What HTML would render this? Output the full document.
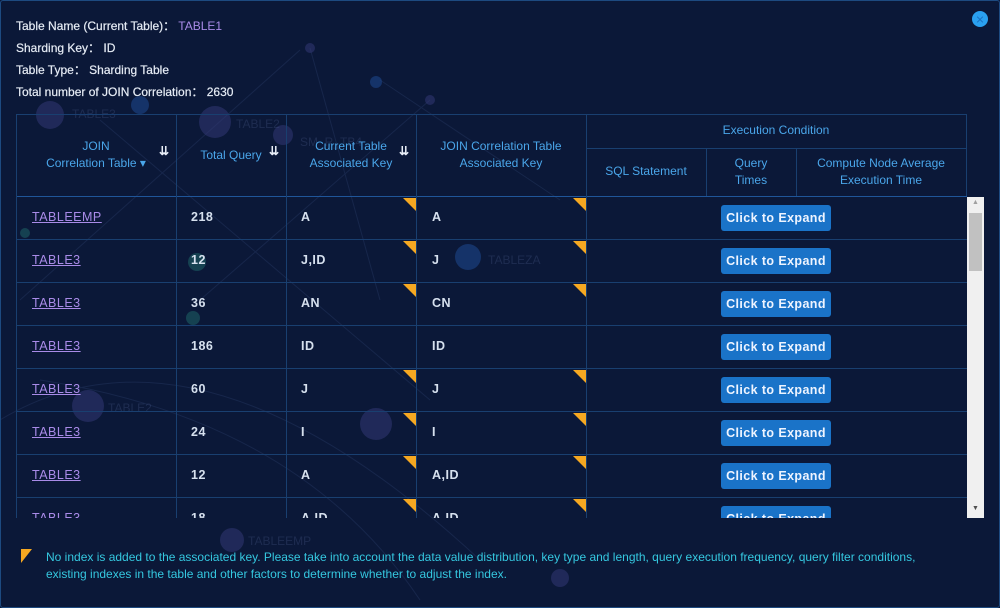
<!DOCTYPE html>
<html><head><meta charset="utf-8"><style>
*{margin:0;padding:0;box-sizing:border-box}
body{width:1000px;height:608px;overflow:hidden;background:#0b1838;font-family:"Liberation Sans",sans-serif;position:relative}
.frame{position:absolute;left:0;top:0;width:1000px;height:608px;border:1px solid #1d4a80;border-radius:3px}
.info{position:absolute;left:16px;font-size:12px;color:#e6ecf5;-webkit-text-stroke:.2px #e6ecf5}
.info span{color:#a98be8;-webkit-text-stroke:0}
.close{position:absolute;left:972px;top:11px;width:16px;height:16px;border-radius:50%;background:#2aa0f0}
.close:before,.close:after{content:"";position:absolute;left:4px;top:7.5px;width:8px;height:1px;background:#1a70c0;transform:rotate(45deg)}
.close:after{transform:rotate(-45deg)}
.vl{position:absolute;width:1px;background:#193f70}
.hl{position:absolute;height:1px;background:#193f70}
.h{position:absolute;color:#4aa6ea;font-size:12px;text-align:center;line-height:17px}
.c{position:absolute;color:#d6e0ee;font-size:12.5px;font-weight:bold;letter-spacing:.5px}
.lnk{color:#a98be8;text-decoration:underline;font-weight:normal}
.tri{position:absolute;width:0;height:0;border-top:13px solid #f6a821;border-left:13px solid transparent}
.btn{position:absolute;left:721px;width:110px;height:26px;background:#1a73c8;border-radius:3px;color:#eef4ff;font-weight:bold;font-size:12.5px;text-align:center;line-height:26px;letter-spacing:.4px}
.clip{position:absolute;left:0;top:197px;width:1000px;height:321px;overflow:hidden}
.sort{position:absolute;color:#e8eef8;font-size:12px;font-weight:bold}
</style></head><body>
<svg style="position:absolute;left:0;top:0" width="1000" height="608">
<g stroke="#23355e" stroke-width="1" fill="none" opacity=".5">
<line x1="310" y1="48" x2="380" y2="300"/><line x1="430" y1="100" x2="200" y2="300"/><line x1="20" y1="300" x2="300" y2="50"/><line x1="100" y1="120" x2="430" y2="400"/><line x1="380" y1="80" x2="560" y2="200"/><path d="M0 420 Q200 300 480 560"/><path d="M40 380 Q300 420 420 600"/></g>
<g fill="#363a7a" opacity=".5"><circle cx="50" cy="115" r="14"/><circle cx="215" cy="122" r="16"/><circle cx="283" cy="135" r="10"/><circle cx="376" cy="424" r="16"/><circle cx="88" cy="406" r="16"/><circle cx="232" cy="540" r="12"/><circle cx="560" cy="578" r="9"/><circle cx="310" cy="48" r="5"/><circle cx="430" cy="100" r="5"/></g>
<g fill="#1f4d99" opacity=".5"><circle cx="468" cy="257" r="13"/><circle cx="376" cy="82" r="6"/><circle cx="140" cy="105" r="9"/></g>
<g fill="#1f6a6a" opacity=".5"><circle cx="197" cy="262" r="9"/><circle cx="25" cy="233" r="5"/><circle cx="193" cy="318" r="7"/></g>
<g fill="#4a5a8a" opacity=".3" font-size="12" font-family="Liberation Sans"><text x="72" y="118">TABLE3</text><text x="236" y="128">TABLE2</text><text x="488" y="264">TABLEZA</text><text x="248" y="545">TABLEEMP</text><text x="108" y="412">TABLE2</text><text x="300" y="146">SM_R_TB4</text></g>
</svg>
<div class="frame"></div>
<div class="close"></div>
<div class="info" style="top:17px">Table Name (Current Table)： <span>TABLE1</span></div>
<div class="info" style="top:39px">Sharding Key： ID</div>
<div class="info" style="top:61px">Table Type： Sharding Table</div>
<div class="info" style="top:83px">Total number of JOIN Correlation： 2630</div>

<div class="hl" style="left:16px;top:114px;width:951px"></div>
<div class="hl" style="left:586px;top:148px;width:381px"></div>
<div class="hl" style="left:16px;top:196px;width:951px;background:#1f5599"></div>
<div class="vl" style="left:16px;top:114px;height:404px"></div>
<div class="vl" style="left:176px;top:114px;height:404px"></div>
<div class="vl" style="left:286px;top:114px;height:404px"></div>
<div class="vl" style="left:416px;top:114px;height:404px"></div>
<div class="vl" style="left:586px;top:114px;height:404px"></div>
<div class="vl" style="left:706px;top:148px;height:48px"></div>
<div class="vl" style="left:796px;top:148px;height:48px"></div>
<div class="vl" style="left:966px;top:114px;height:82px"></div>

<div class="h" style="left:16px;top:138px;width:160px">JOIN<br>Correlation Table ▾</div>
<div class="sort" style="left:159px;top:144px">⇊</div>
<div class="h" style="left:186px;top:147px;width:90px">Total Query</div>
<div class="sort" style="left:269px;top:144px">⇊</div>
<div class="h" style="left:296px;top:138px;width:110px">Current Table<br>Associated Key</div>
<div class="sort" style="left:399px;top:144px">⇊</div>
<div class="h" style="left:416px;top:138px;width:170px">JOIN Correlation Table<br>Associated Key</div>
<div class="h" style="left:586px;top:122px;width:380px">Execution Condition</div>
<div class="h" style="left:586px;top:163px;width:120px">SQL Statement</div>
<div class="h" style="left:706px;top:155px;width:90px">Query<br>Times</div>
<div class="h" style="left:796px;top:155px;width:170px">Compute Node Average<br>Execution Time</div>

<div class="clip">
<div class="hl" style="left:16px;top:42px;width:951px"></div>
<div class="hl" style="left:16px;top:85px;width:951px"></div>
<div class="hl" style="left:16px;top:128px;width:951px"></div>
<div class="hl" style="left:16px;top:171px;width:951px"></div>
<div class="hl" style="left:16px;top:214px;width:951px"></div>
<div class="hl" style="left:16px;top:257px;width:951px"></div>
<div class="hl" style="left:16px;top:300px;width:951px"></div>

<div class="c lnk" style="left:32px;top:13px">TABLEEMP</div><div class="c" style="left:191px;top:13px">218</div><div class="c" style="left:301px;top:13px">A</div><div class="c" style="left:432px;top:13px">A</div>
<div class="c lnk" style="left:32px;top:56px">TABLE3</div><div class="c" style="left:191px;top:56px">12</div><div class="c" style="left:301px;top:56px">J,ID</div><div class="c" style="left:432px;top:56px">J</div>
<div class="c lnk" style="left:32px;top:99px">TABLE3</div><div class="c" style="left:191px;top:99px">36</div><div class="c" style="left:301px;top:99px">AN</div><div class="c" style="left:432px;top:99px">CN</div>
<div class="c lnk" style="left:32px;top:142px">TABLE3</div><div class="c" style="left:191px;top:142px">186</div><div class="c" style="left:301px;top:142px">ID</div><div class="c" style="left:432px;top:142px">ID</div>
<div class="c lnk" style="left:32px;top:185px">TABLE3</div><div class="c" style="left:191px;top:185px">60</div><div class="c" style="left:301px;top:185px">J</div><div class="c" style="left:432px;top:185px">J</div>
<div class="c lnk" style="left:32px;top:228px">TABLE3</div><div class="c" style="left:191px;top:228px">24</div><div class="c" style="left:301px;top:228px">I</div><div class="c" style="left:432px;top:228px">I</div>
<div class="c lnk" style="left:32px;top:271px">TABLE3</div><div class="c" style="left:191px;top:271px">12</div><div class="c" style="left:301px;top:271px">A</div><div class="c" style="left:432px;top:271px">A,ID</div>
<div class="c lnk" style="left:32px;top:314px">TABLE3</div><div class="c" style="left:191px;top:314px">18</div><div class="c" style="left:301px;top:314px">A,ID</div><div class="c" style="left:432px;top:314px">A,ID</div>

<div class="tri" style="left:403px;top:1px"></div><div class="tri" style="left:573px;top:1px"></div>
<div class="tri" style="left:403px;top:44px"></div><div class="tri" style="left:573px;top:44px"></div>
<div class="tri" style="left:403px;top:87px"></div><div class="tri" style="left:573px;top:87px"></div>
<div class="tri" style="left:403px;top:173px"></div><div class="tri" style="left:573px;top:173px"></div>
<div class="tri" style="left:403px;top:216px"></div><div class="tri" style="left:573px;top:216px"></div>
<div class="tri" style="left:403px;top:259px"></div><div class="tri" style="left:573px;top:259px"></div>
<div class="tri" style="left:403px;top:302px"></div><div class="tri" style="left:573px;top:302px"></div>

<div class="btn" style="top:8px">Click to Expand</div>
<div class="btn" style="top:51px">Click to Expand</div>
<div class="btn" style="top:94px">Click to Expand</div>
<div class="btn" style="top:137px">Click to Expand</div>
<div class="btn" style="top:180px">Click to Expand</div>
<div class="btn" style="top:223px">Click to Expand</div>
<div class="btn" style="top:266px">Click to Expand</div>
<div class="btn" style="top:309px">Click to Expand</div>

<div style="position:absolute;left:967px;top:0;width:17px;height:321px;background:#f0f0f0"></div>
<div style="position:absolute;left:969px;top:16px;width:13px;height:58px;background:#c1c1c1"></div>
<div style="position:absolute;left:967px;top:2px;width:17px;text-align:center;font-size:7px;color:#a0a0a0">▲</div>
<div style="position:absolute;left:967px;top:308px;width:17px;text-align:center;font-size:7px;color:#505050">▼</div>
</div>

<div class="tri" style="left:21px;top:549px;border-top:14px solid #f6a821;border-left:0;border-right:11px solid transparent"></div>
<div style="position:absolute;left:46px;top:549px;width:940px;font-size:12px;line-height:17px;color:#35c8e0;letter-spacing:0">No index is added to the associated key. Please take into account the data value distribution, key type and length, query execution frequency, query filter conditions,<br>existing indexes in the table and other factors to determine whether to adjust the index.</div>
</body></html>
